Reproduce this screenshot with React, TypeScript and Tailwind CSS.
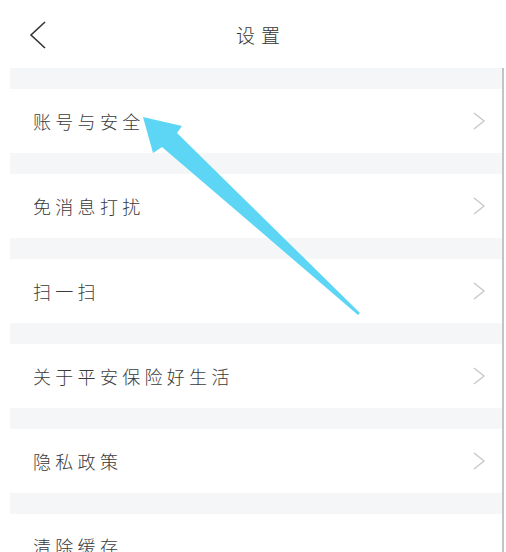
const ITEMS = ['账号与安全', '免消息打扰', '扫一扫', '关于平安保险好生活', '隐私政策', '清除缓存'];

function Chevron() {
  return (
    <svg width="14" height="18" viewBox="0 0 14 18" className="shrink-0">
      <polyline points="2,1 12,9 2,17" fill="none" stroke="#c8c8c8" strokeWidth="1.4" />
    </svg>
  );
}

function Row({ label, last }: { label: string; last?: boolean }) {
  return (
    <div className="h-[64px] bg-white flex items-center pl-[23px] pr-[16px]">
      <span className="flex-1 text-[18px] tracking-[4.3px] text-[#3a3a3a] font-light leading-none">{label}</span>
      {!last && <Chevron />}
    </div>
  );
}

export default function App() {
  return (
    <div
      className="relative w-[506px] h-[552px] overflow-hidden bg-white"
      style={{ fontFamily: '"Noto Sans CJK SC", "Noto Sans", sans-serif' }}
    >
      {/* header */}
      <div className="h-[68px] flex items-center relative">
        <svg className="absolute left-[28px] top-[20px]" width="20" height="30" viewBox="0 0 20 30">
          <polyline points="17,2 3,15 17,28" fill="none" stroke="#333" strokeWidth="1.6" />
        </svg>
        <div className="flex-1 text-center text-[19px] tracking-[6px] pl-[16px] text-[#333] font-light leading-none">设置</div>
      </div>

      <div className="ml-[10px] w-[494px] border-r-2 border-[#c4c4c4]">
        {ITEMS.map((item, i) => (
          <div key={item}>
            <div className="h-[21px] bg-[#f5f6f8]" />
            <Row label={item} last={i === ITEMS.length - 1} />
          </div>
        ))}
      </div>

      {/* annotation arrow */}
      <svg className="absolute left-0 top-0 pointer-events-none" width="506" height="552" viewBox="0 0 506 552">
        <polygon
          points="143,117 182,126 177,133 360,313 358,315 162,147 153,153"
          fill="#5cd6f4"
        />
      </svg>
    </div>
  );
}
